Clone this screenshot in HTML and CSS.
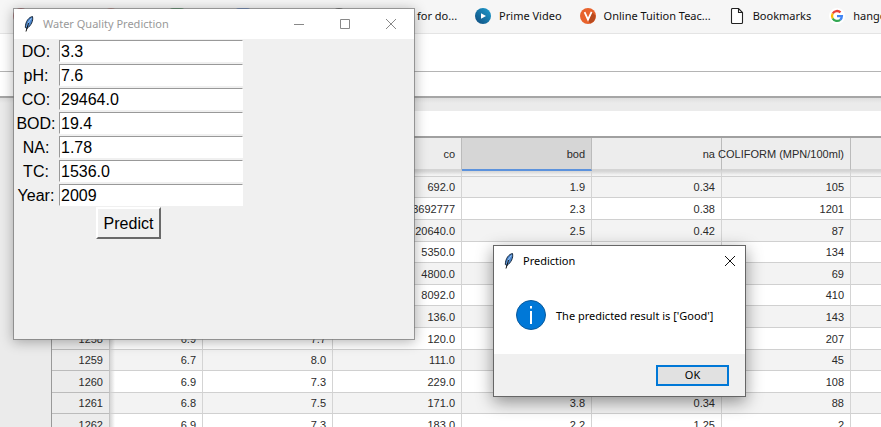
FILE: index.html
```html
<!DOCTYPE html>
<html lang="en">
<head>
<meta charset="utf-8">
<title>Water Quality Prediction</title>
<link rel="stylesheet" href="styles.css">
</head>
<body>
<div class="desktop">
  <div class="browser">
    <nav class="bookmarks" aria-label="Bookmarks">
      <div class="bookmarks-lead">
        <span class="dot dot-red"></span>
        <span class="dot dot-rose"></span>
        <span class="dot dot-green"></span>
        <span class="dot dot-blue"></span>
        <span class="dot dot-dark"></span>
      </div>
      <a class="bookmark" href="#">for do...</a>
      <a class="bookmark" href="#">
        <svg class="favicon" viewBox="0 0 16 16"><defs><linearGradient id="pv" x1="0" y1="1" x2="1" y2="0"><stop offset="0" stop-color="#0f4a7d"/><stop offset="1" stop-color="#1e9fd0"/></linearGradient></defs><circle cx="8" cy="8" r="8" fill="url(#pv)"/><path d="M6 5.2v5.6L11 8z" fill="#fff"/></svg>
        <span>Prime Video</span>
      </a>
      <a class="bookmark" href="#">
        <svg class="favicon" viewBox="0 0 16 16"><circle cx="8" cy="8" r="8" fill="#e8622c"/><path d="M8 12l4-8 3.5 3.5A8 8 0 0 1 10 15.6z" fill="#b94a1e"/><path d="M4.6 4.2L8 11.6l3.6-7.8" fill="none" stroke="#fff" stroke-width="1.8"/></svg>
        <span>Online Tuition Teac...</span>
      </a>
      <a class="bookmark" href="#">
        <svg class="favicon" viewBox="0 0 16 16"><path d="M2.500 1.500q0-1 1-1h6l4 4v10q0 1-1 1h-9q-1 0-1-1zM9.500 .5v4h4" fill="#fff" stroke="#222" stroke-width="1.1"/></svg>
        <span>Bookmarks</span>
      </a>
      <a class="bookmark" href="#">
        <svg class="favicon" viewBox="0 0 16 16"><circle cx="8" cy="8" r="8" fill="#fff"/><g fill="none" stroke-width="2.3"><path d="M3.700 5.500A5 5 0 0 1 11.500 4.400" stroke="#ea4335"/><path d="M3.700 5.500A5 5 0 0 0 3.700 10.500" stroke="#fbbc05"/><path d="M3.700 10.500A5 5 0 0 0 11.200 11.800" stroke="#34a853"/><path d="M11.200 11.800A5 5 0 0 0 12.900 8.100H8" stroke="#4285f4"/></g></svg>
        <span>hangouts</span>
      </a>
    </nav>
    <div class="toolbar"></div>
    <div class="formula"></div>
    <main class="viewer">
      <div class="sheet">
        <div class="sheet-top"></div>
        <table class="grid">
          <colgroup><col class="c-row"><col class="c-do"><col class="c-wide"><col class="c-mid"><col class="c-wide"><col class="c-wide"><col class="c-mid"><col class="c-wide"></colgroup>
          <thead>
            <tr class="head"><th></th><th></th><th></th><th>co</th><th class="selected">bod</th><th>na</th><th><span class="long">COLIFORM (MPN/100ml)</span></th><th></th></tr>
            <tr class="edge"><td></td><td></td><td></td><td></td><td></td><td></td><td></td><td></td></tr>
          </thead>
          <tbody>
            <tr><th>1251</th><td></td><td></td><td>692.0</td><td>1.9</td><td>0.34</td><td>105</td><td></td></tr>
            <tr><th>1252</th><td></td><td></td><td>3692777</td><td>2.3</td><td>0.38</td><td>1201</td><td></td></tr>
            <tr><th>1253</th><td></td><td></td><td>20640.0</td><td>2.5</td><td>0.42</td><td>87</td><td></td></tr>
            <tr><th>1254</th><td></td><td></td><td>5350.0</td><td></td><td></td><td>134</td><td></td></tr>
            <tr><th>1255</th><td></td><td></td><td>4800.0</td><td></td><td></td><td>69</td><td></td></tr>
            <tr><th>1256</th><td></td><td></td><td>8092.0</td><td></td><td></td><td>410</td><td></td></tr>
            <tr><th>1257</th><td></td><td></td><td>136.0</td><td></td><td></td><td>143</td><td></td></tr>
            <tr><th>1258</th><td>6.9</td><td>7.7</td><td>120.0</td><td></td><td></td><td>207</td><td></td></tr>
            <tr><th>1259</th><td>6.7</td><td>8.0</td><td>111.0</td><td></td><td></td><td>45</td><td></td></tr>
            <tr><th>1260</th><td>6.9</td><td>7.3</td><td>229.0</td><td></td><td></td><td>108</td><td></td></tr>
            <tr><th>1261</th><td>6.8</td><td>7.5</td><td>171.0</td><td>3.8</td><td>0.34</td><td>88</td><td></td></tr>
            <tr><th>1262</th><td>6.9</td><td>7.3</td><td>183.0</td><td>2.2</td><td>1.25</td><td>2</td><td></td></tr>
          </tbody>
        </table>
      </div>
    </main>
  </div>

  <section class="window app" aria-label="Water Quality Prediction">
    <header class="titlebar">
      <svg class="feather" viewBox="0 0 12 16"><path d="M9.500 .5C6 1.200 2.500 5 2.300 11.500L4 12.500C8 9.500 10.500 5 9.500 .5z" fill="#4a86cf" stroke="#1c2b3c"/><path d="M8.500 2.500C6 5 4.500 8 4 11" fill="none" stroke="#a8cdf5"/><path d="M5.500 7L3 15.500" stroke="#111"/></svg>
      <h1 class="title">Water Quality Prediction</h1>
      <div class="controls">
        <button type="button" aria-label="Minimize"><svg viewBox="0 0 10 10"><path d="M0 5.500h10"/></svg></button>
        <button type="button" aria-label="Maximize"><svg viewBox="0 0 10 10"><path d="M.5 .5h9v9h-9z"/></svg></button>
        <button type="button" aria-label="Close"><svg viewBox="0 0 10 10"><path d="M0 0l10 10M10 0L0 10"/></svg></button>
      </div>
    </header>
    <form class="fields">
      <label for="do">DO:</label><input id="do" type="text" value="3.3">
      <label for="ph">pH:</label><input id="ph" type="text" value="7.6">
      <label for="co">CO:</label><input id="co" type="text" value="29464.0">
      <label for="bod">BOD:</label><input id="bod" type="text" value="19.4">
      <label for="na">NA:</label><input id="na" type="text" value="1.78">
      <label for="tc">TC:</label><input id="tc" type="text" value="1536.0">
      <label for="year">Year:</label><input id="year" type="text" value="2009">
      <button type="button" class="predict">Predict</button>
    </form>
  </section>

  <section class="window dialog" role="dialog" aria-label="Prediction">
    <header class="titlebar">
      <svg class="feather" viewBox="0 0 12 16"><path d="M9.500 .5C6 1.200 2.500 5 2.300 11.500L4 12.500C8 9.500 10.500 5 9.500 .5z" fill="#4a86cf" stroke="#1c2b3c"/><path d="M8.500 2.500C6 5 4.500 8 4 11" fill="none" stroke="#a8cdf5"/><path d="M5.500 7L3 15.500" stroke="#111"/></svg>
      <h2 class="title">Prediction</h2>
      <div class="controls">
        <button type="button" aria-label="Close"><svg viewBox="0 0 10 10"><path d="M0 0l10 10M10 0L0 10"/></svg></button>
      </div>
    </header>
    <div class="message">
      <svg class="info" viewBox="0 0 30 30"><circle cx="15" cy="15" r="14.500" fill="#0078d7" stroke="#0a5a9c"/><path d="M15 11v13M15 6v2.500" stroke="#fff" stroke-width="2"/></svg>
      <p>The predicted result is ['Good']</p>
    </div>
    <footer class="actions"><button type="button" class="ok">OK</button></footer>
  </section>
</div>
</body>
</html>
```
FILE: styles.css
```css
* { box-sizing: border-box; }

body {
  margin: 0;
  background: #ebebeb;
  font-family: "Noto Sans", "Open Sans", sans-serif;
  color: #000;
}

.desktop {
  position: relative;
  height: 100vh;
  overflow: hidden;
}

/* Browser page behind the windows */
.bookmarks {
  display: flex;
  align-items: center;
  gap: 18px;
  height: 34px;
  padding-bottom: 1px;
  overflow: hidden;
  background: #f6f6f6;
  border-bottom: 1px solid #e4e4e4;
  font-size: 11px;
}

.bookmarks-lead {
  display: flex;
  flex: none;
  gap: 50px;
  width: 399px;
  padding-left: 13px;
}

.dot { width: 16px; height: 16px; border-radius: 4px; }
.dot-red { background: #c0404a; border-radius: 8px; }
.dot-rose { background: #e07a70; border-radius: 8px; margin-left: 24px; }
.dot-green { background: #1e8e3e; }
.dot-blue { background: #4285f4; }
.dot-dark { background: #333; border-radius: 8px; margin-left: 30px; }

.bookmark {
  display: flex;
  flex: none;
  align-items: center;
  gap: 8px;
  color: #111;
  text-decoration: none;
  line-height: 16px;
  white-space: nowrap;
}

.favicon { width: 16px; height: 16px; }

.toolbar { height: 38px; background: #fff; border-bottom: 1px solid #b4b4b4; }
.formula { height: 26px; background: #fff; border-bottom: 2px solid #a6a6a6; }

.viewer {
  padding: 13px 0 0 51px;
  background: linear-gradient(#dedede, #ebebeb 5px);
}

.sheet { border-left: 1px solid #999; }
.sheet-top { height: 27px; background: #fff; border-bottom: 2px solid #a0a0a0; }

.grid {
  width: 929px;
  table-layout: fixed;
  border-collapse: separate;
  border-spacing: 0;
  background: #fff;
  color: #2a2a2a;
  font-family: "Liberation Sans", Arial, sans-serif;
  font-size: 11px;
  line-height: 16px;
}

.c-row { width: 58px; }
.c-do { width: 93px; }
.c-mid { width: 129px; }
.c-wide { width: 130px; }

.grid th,
.grid td {
  padding: 0 6px 0 0;
  border-right: 1px solid #d4d4d4;
  border-bottom: 1px solid #d0d0d0;
  font-weight: normal;
  text-align: right;
  white-space: nowrap;
}

.grid .head th {
  height: 33px;
  background: #ededed;
  border-right-color: #bbb;
  border-bottom: 2px solid #d4d4d4;
}

.grid .head .selected {
  background: #d6d6d6;
  border-bottom-color: #5c92dc;
}

.long {
  display: flex;
  justify-content: flex-end;
}

.grid .edge td {
  height: 6px;
  background: linear-gradient(#d4d4d4, #f3f3f3 4px);
}

.grid tbody tr { height: 22px; }
.grid tbody tr:nth-child(5n+1),
.grid tbody tr:nth-child(5n+4) { height: 21px; }
.grid tbody tr:nth-child(odd) { background: #f3f3f3; }

.grid tbody th {
  background: #ececec;
  border-right: 1px solid #c4c4c4;
  border-bottom-color: #bbb;
}

.grid tbody th + td { background: linear-gradient(90deg, #d6d6d6, transparent 5px); }

/* Desktop windows */
.window {
  position: absolute;
  display: flex;
  flex-direction: column;
  background: #fff padding-box;
}

.app {
  left: 13px;
  top: 8px;
  width: 402px;
  height: 332px;
  background-color: #f0f0f0;
  border: 1px solid rgba(120, 120, 120, .7);
  box-shadow: 0 2px 12px rgba(0, 0, 0, .3);
}

.dialog {
  left: 493px;
  top: 245px;
  width: 253px;
  height: 152px;
  border: 1px solid #666;
  box-shadow: 0 5px 16px rgba(0, 0, 0, .42);
}

.titlebar {
  display: flex;
  align-items: center;
  height: 30px;
  padding-left: 9px;
  background: #fff;
}

.feather { width: 12px; height: 16px; }

.title {
  flex: 1;
  margin: 0 0 0 8px;
  font-size: 11px;
  font-weight: normal;
  line-height: 16px;
}

.controls { display: flex; }

.controls button {
  display: grid;
  place-items: center;
  width: 46px;
  height: 28px;
  padding: 0;
  border: 0;
  background: none;
}

.dialog .controls button { width: 30px; }

.controls svg {
  width: 10px;
  height: 10px;
  fill: none;
  stroke: #111;
  overflow: visible;
}

.app .title { color: #999; }
.app .controls svg { stroke: #888; }

.fields {
  display: grid;
  grid-template-columns: 44px 184px;
  column-gap: 1px;
  row-gap: 2px;
  padding-top: 1px;
  font: 16px/22px "Liberation Sans", Arial, sans-serif;
}

.fields label {
  height: 22px;
  line-height: 24px;
  text-align: center;
}

.fields input {
  width: 100%;
  height: 22px;
  padding: 2px 1px 0;
  border: 1px solid #fff;
  border-top-color: #999;
  border-left-color: #999;
  background: #fff;
  color: #000;
  font: inherit;
  line-height: 18px;
}

.predict {
  grid-column: 1 / -1;
  justify-self: center;
  width: 65px;
  height: 32px;
  margin-top: -1px;
  padding: 2px 0 0;
  border: 2px solid;
  border-color: #fff #696969 #696969 #fff;
  background: #f0f0f0;
  color: #000;
  font: inherit;
}

.message {
  display: flex;
  flex: 1;
  align-items: center;
  gap: 10px;
  padding-left: 22px;
  font-size: 11px;
}

.message p { margin: 0; }
.info { width: 30px; height: 30px; }

.actions {
  display: flex;
  align-items: center;
  justify-content: flex-end;
  height: 42px;
  padding-right: 16px;
  background: #f0f0f0;
}

.ok {
  width: 73px;
  height: 21px;
  padding: 0;
  border: 2px solid #0078d7;
  background: #e1e1e1;
  color: #000;
  font: 11px/16px "Noto Sans", sans-serif;
}
```
